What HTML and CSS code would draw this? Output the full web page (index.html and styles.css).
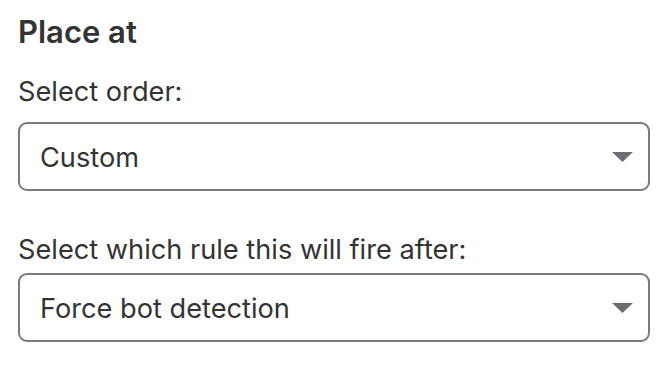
FILE: index.html
```html
<!DOCTYPE html>
<html lang="en">
<head>
  <meta charset="UTF-8" />
  <meta name="viewport" content="width=device-width, initial-scale=1" />
  <title>Place at</title>
  <link rel="stylesheet" href="styles.css">
</head>
<body>
  <div class="panel">
    <h2 class="panel-title">Place at</h2>

    <label class="field-label order-label" for="orderSelect">Select order:</label>
    <div class="select-wrap">
      <select id="orderSelect" class="select">
        <option>Custom</option>
        <option>First</option>
        <option>Last</option>
      </select>
      <svg class="select-arrow" width="21" height="10" viewBox="0 0 21 10" aria-hidden="true">
        <path d="M0 0 H21 L10.5 10 Z" fill="#6d6e71" />
      </svg>
    </div>

    <label class="field-label rule-label" for="ruleSelect">Select which rule this will fire after:</label>
    <div class="select-wrap rule-wrap">
      <select id="ruleSelect" class="select">
        <option>Force bot detection</option>
      </select>
      <svg class="select-arrow" width="21" height="10" viewBox="0 0 21 10" aria-hidden="true">
        <path d="M0 0 H21 L10.5 10 Z" fill="#6d6e71" />
      </svg>
    </div>
  </div>
</body>
</html>
```

FILE: styles.css
```css
* {
  box-sizing: border-box;
}

body {
  margin: 0;
  background: #fff;
  font-family: Inter, "Noto Sans", sans-serif;
  color: #333;
}

.panel {
  width: 632px;
  margin-left: 18px;
  padding-top: 12px;
  display: flex;
  flex-direction: column;
}

.panel-title {
  margin: 0;
  font-size: 31px;
  line-height: 40px;
  font-weight: 600;
  color: #333;
}

.field-label {
  display: block;
  font-size: 27.2px;
  line-height: 32px;
  color: #333;
}

.order-label {
  margin-top: 24px;
}

.rule-label {
  margin-top: 43px;
}

.select-wrap {
  position: relative;
  margin-top: 14px;
}

.rule-wrap {
  margin-top: 7px;
}

.select {
  appearance: none;
  -webkit-appearance: none;
  width: 100%;
  height: 69px;
  padding: 17px 60px 14px 20px;
  border: 2px solid #7a7a7a;
  border-radius: 9px;
  background: #fff;
  font-family: inherit;
  font-size: 27.2px;
  line-height: 34px;
  color: #333;
}

.select-arrow {
  position: absolute;
  right: 17px;
  top: 50%;
  transform: translateY(-50%);
  pointer-events: none;
}
```
